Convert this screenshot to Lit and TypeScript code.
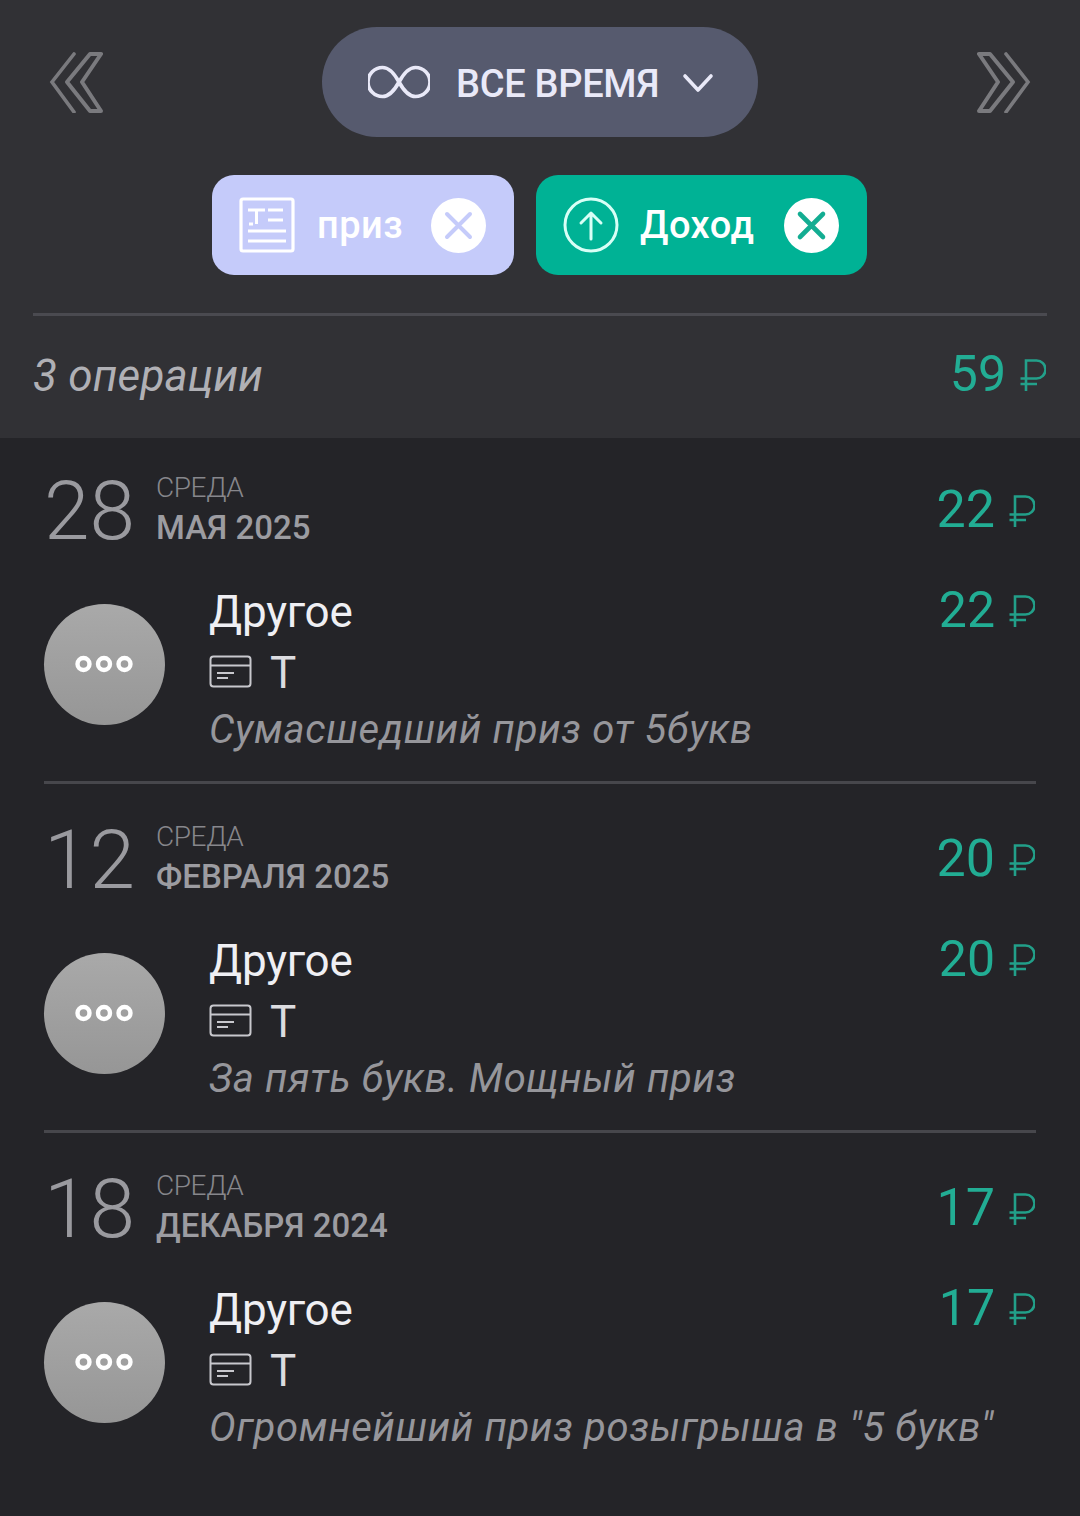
import { LitElement, html, css, svg } from "lit";
import { customElement } from "lit/decorators.js";

const days = [
  { d: "28", w: "СРЕДА", m: "МАЯ 2025", a: "22", note: "Сумасшедший приз от 5букв" },
  { d: "12", w: "СРЕДА", m: "ФЕВРАЛЯ 2025", a: "20", note: "За пять букв. Мощный приз" },
  { d: "18", w: "СРЕДА", m: "ДЕКАБРЯ 2024", a: "17", note: 'Огромнейший приз розыгрыша в "5 букв"' },
];

const rub = () => html`<svg viewBox="0 0 26 33" fill="none" stroke="currentColor" stroke-width="2.6"><path d="M6 33V2.500h10.500a9 9 0 0 1 0 18H.5M.5 26H17"/></svg>`;

@customElement("app-root")
export class AppRoot extends LitElement {
  static styles = css`
    :host { display: block; width: 1080px; height: 1516px; overflow: hidden; background: #242428; font-family: Roboto, "Noto Sans", sans-serif; }
    header { background: #313135; height: 438px; box-sizing: border-box; padding: 27px 33px 0; }
    .top { display: flex; justify-content: space-between; align-items: center; height: 110px; padding: 0 16px; }
    .nav { width: 54px; height: 62px; display: block; color: #7a7a7e; }
    .pill { width: 436px; height: 110px; box-sizing: border-box; border-radius: 55px; background: #565a6e; color: #e9e9f8; display: flex; align-items: center; padding-left: 46px; font-size: 38px; font-weight: 500; letter-spacing: -0.3px; }
    .pill .inf { width: 62px; height: 34px; margin-right: 26px; flex: none; }
    .pill .label { padding-top: 3px; }
    .pill .chev { width: 32px; height: 22px; margin-left: 23px; margin-top: 2px; flex: none; }
    .chips { display: flex; justify-content: center; gap: 22px; margin-top: 38px; padding-right: 1px; }
    .chip { height: 100px; box-sizing: border-box; border-radius: 22px; display: flex; align-items: center; color: #fff; font-size: 38px; font-weight: 500; letter-spacing: 0.5px; }
    .chip.a { width: 302px; background: #c5cbfa; padding-left: 27px; }
    .chip.b { width: 331px; background: #00b295; padding-left: 27px; }
    .chip .ic { width: 56px; height: 56px; flex: none; }
    .chip span { margin-left: 22px; flex: 1; }
    .chip.b span { margin-left: 21px; }
    .x { width: 55px; height: 55px; flex: none; margin-right: 28px; }
    .summary { border-top: 3px solid #4a4a50; margin-top: 38px; height: 120px; display: flex; justify-content: space-between; align-items: center; box-sizing: border-box; }
    .ops { font-style: italic; font-size: 44px; font-weight: 400; color: #b0b0b5; letter-spacing: 0.2px; padding-top: 2px; }
    .money { color: #22ad94; display: flex; align-items: center; font-size: 50px; font-weight: 400; line-height: 1; }
    .money svg { width: 26px; height: 33px; margin-left: 14px; margin-right: 1px; margin-top: 1px; opacity: .9; flex: none; }
    .sum-m { margin-top: -2px; }
    .day { height: 349px; box-sizing: border-box; padding: 0 44px; display: flex; flex-direction: column; position: relative; }
    .day-head { display: flex; align-items: flex-start; height: 144px; padding-top: 30px; box-sizing: border-box; }
    .num { font-size: 82px; font-weight: 300; color: #9a9a9f; line-height: 86px; width: 112px; letter-spacing: 0; }
    .dt { display: flex; flex-direction: column; margin-top: -2px; }
    .w { font-size: 28px; font-weight: 300; color: #87878c; line-height: 36px; margin-top: 4px; letter-spacing: -0.4px; }
    .m { font-size: 33px; font-weight: 500; color: #9c9ca1; line-height: 44px; letter-spacing: 0; }
    .day-head .money { margin-left: auto; margin-top: 16px; font-size: 52px; }
    .item { display: flex; position: relative; height: 204px; }
    .circle { width: 121px; height: 121px; border-radius: 50%; background: linear-gradient(#a9a9a9, #969696); margin-top: 22px; flex: none; display: flex; align-items: center; justify-content: center; }
    .circle svg { width: 58px; height: 18px; margin-bottom: 2px; margin-right: 1px; }
    .body { margin-left: 44px; flex: 1; min-width: 0; }
    .title { font-size: 44px; color: #efeff3; line-height: 60px; letter-spacing: -0.2px; }
    .acct { display: flex; align-items: center; height: 58px; color: #dcdce0; font-size: 44px; font-weight: 400; }
    .acct svg { width: 43px; height: 33px; margin-right: 18px; flex: none; }
    .acct span { margin-top: 4px; }
    .note { font-style: italic; font-weight: 400; font-size: 40px; color: #96969b; line-height: 60px; white-space: nowrap; letter-spacing: 0.7px; }
    .item .money { position: absolute; right: 0; top: 3px; }
    .rule { border: 0; height: 3px; background: #47474c; margin: 0; position: absolute; left: 44px; right: 44px; bottom: 3px; }
  `;

  nav(right: boolean) {
    const paths = svg`<path d="M25 3 3 31l22 30" stroke-width="3.6" /><path d="M52 3H41L18 31l23 29h11L33 31Z" stroke-width="4" stroke-linejoin="round" />`;
    return html`<svg class="nav" viewBox="0 0 54 62" fill="none" stroke="currentColor" stroke-linecap="round">
      ${right ? svg`<g transform="translate(54 0) scale(-1 1)">${paths}</g>` : paths}
    </svg>`;
  }

  xIcon(color: string, w: number) {
    return html`<svg class="x" viewBox="0 0 55 55"><circle cx="27.5" cy="27.5" r="27.5" fill="#fff"/><path d="M16 16l23 23M39 16 16 39" stroke=${color} stroke-width=${w} stroke-linecap="round"/></svg>`;
  }

  render() {
    return html`
      <header>
        <div class="top">
          ${this.nav(false)}
          <div class="pill">
            <svg class="inf" viewBox="0 0 64 34" fill="none" stroke="currentColor" stroke-width="3.8"><path d="M32 17C26 6 21 2 15 2a15 15 0 0 0 0 30c6 0 11-4 17-15s11-15 17-15a15 15 0 0 1 0 30c-6 0-11-4-17-15Z"/></svg>
            <span class="label">ВСЕ ВРЕМЯ</span>
            <svg class="chev" viewBox="0 0 32 22" fill="none" stroke="currentColor" stroke-width="3.6" stroke-linecap="round" stroke-linejoin="round"><path d="M3 4l13 14L29 4"/></svg>
          </div>
          ${this.nav(true)}
        </div>
        <div class="chips">
          <div class="chip a">
            <svg class="ic" viewBox="0 0 56 56" fill="none" stroke="#fff" stroke-width="3"><rect x="2" y="2" width="52" height="52" rx="2" stroke-width="3.2"/><path d="M9 13h17M17.500 13v14M10 27h4M29 13h15M29 23h15M9 34h38M9 44h38" /></svg>
            <span>приз</span>
            ${this.xIcon("#c5cbfa", 4)}
          </div>
          <div class="chip b">
            <svg class="ic" viewBox="0 0 56 56" fill="none" stroke="#d8fff6" stroke-width="3" stroke-linecap="round" stroke-linejoin="round"><circle cx="28" cy="28" r="26"/><path d="M28 42V16M18 26l10-10 10 10"/></svg>
            <span>Доход</span>
            ${this.xIcon("#13ad92", 4.6)}
          </div>
        </div>
        <div class="summary">
          <div class="ops">3 операции</div>
          <div class="money sum-m">59${rub()}</div>
        </div>
      </header>
      ${days.map((d, i) => html`
        <section class="day">
          <div class="day-head">
            <div class="num">${d.d}</div>
            <div class="dt"><div class="w">${d.w}</div><div class="m">${d.m}</div></div>
            <div class="money">${d.a}${rub()}</div>
          </div>
          <div class="item">
            <div class="circle">
              <svg viewBox="0 0 58 18" fill="none" stroke="#fff" stroke-width="4.4"><circle cx="8.500" cy="9" r="6"/><circle cx="29" cy="9" r="6"/><circle cx="49.500" cy="9" r="6"/></svg>
            </div>
            <div class="body">
              <div class="title">Другое</div>
              <div class="acct">
                <svg viewBox="0 0 43 33" fill="none" stroke="#c8c8cd" stroke-width="2"><rect x="1.500" y="1.500" width="40" height="30" rx="3"/><path d="M1.500 10.500h40M8 18h17M8 23h11"/></svg>
                <span>T</span>
              </div>
              <div class="note">${d.note}</div>
            </div>
            <div class="money">${d.a}${rub()}</div>
          </div>
          ${i < 2 ? html`<hr class="rule" />` : ""}
        </section>
      `)}
    `;
  }
}
